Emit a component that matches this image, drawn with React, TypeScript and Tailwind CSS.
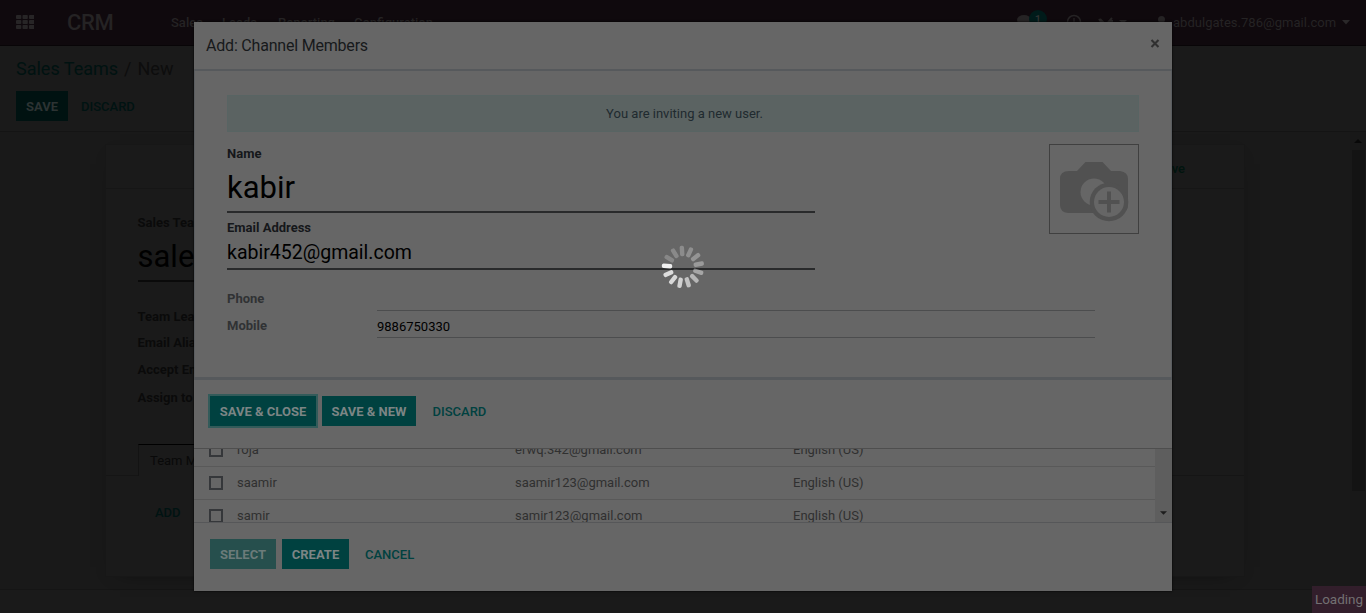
import type { ReactNode } from 'react';

const SPOKES = [0.9, 0.78, 0.75, 0.7, 0.6, 0.52, 0.42, 0.34, 0.3, 0.27, 0.25, 0.23, 0.22];

function Spinner() {
  return (
    <svg className="absolute left-[661px] top-[245px]" width="44" height="44" viewBox="-22 -22 44 44">
      {SPOKES.map((opacity, i) => (
        <rect
          key={i}
          x="10.8"
          y="-2.2"
          width="10.4"
          height="4.4"
          rx="1.8"
          fill="#ffffff"
          opacity={opacity}
          transform={`rotate(${183.5 - (i * 360) / SPOKES.length})`}
        />
      ))}
    </svg>
  );
}

function Camera() {
  return (
    <svg width="88" height="88" viewBox="0 0 88 88">
      <path
        d="M19 26H27L35.5 17H52.5L61 26H70Q78 27 78 34V60Q78 67 71 68H18Q10 67 10 60V34Q10 26 19 26Z"
        fill="#515151"
      />
      <circle cx="44" cy="47" r="13.5" fill="#666" />
      <circle cx="59" cy="57" r="19.3" fill="#515151" />
      <circle cx="59" cy="57" r="15" fill="#666" />
      <path d="M59 46.5V67.5M48.5 57H69.5" stroke="#515151" strokeWidth="4" />
    </svg>
  );
}

function Button({ className, children }: { className: string; children: ReactNode }) {
  return (
    <button className={`h-[30px] shrink-0 whitespace-nowrap text-center text-[13px] font-bold ${className}`}>
      {children}
    </button>
  );
}

function NavBar() {
  return (
    <header className="flex h-[46px] shrink-0 border-b border-[#080507] bg-[#0f090d] text-[13px] font-medium leading-[45px] text-[#252324]">
      <svg className="ml-4 mt-[15px] shrink-0" width="18" height="14" viewBox="0 0 18 14" fill="#272526">
        {[0, 5, 10].map((y) =>
          [0, 6.5, 13].map((x) => <rect key={`${x}-${y}`} x={x} y={y} width="5.3" height="4" rx="0.8" />),
        )}
      </svg>
      <span className="ml-[33px] w-[104px] text-[22px] tracking-[-0.4px]">CRM</span>
      <span className="w-[51px]">Sales</span>
      <span className="w-[56px]">Leads</span>
      <span className="w-[76px]">Reporting</span>
      <span className="w-[663px]">Configuration</span>
      <div className="flex w-[156px] shrink-0">
        <svg width="156" height="30" viewBox="0 0 156 30" fill="#252324">
          <ellipse cx="7" cy="20" rx="7" ry="5" />
          <circle cx="21" cy="19" r="9" fill="#001b1a" />
          <text x="21" y="22.500" textAnchor="middle" fontSize="11" fill="#333">1</text>
          <circle cx="57" cy="22" r="6.500" fill="none" stroke="#252324" strokeWidth="1.500" />
          <path d="M57 18V23H54" fill="none" stroke="#252324" strokeWidth="1.300" />
          <path d="M83 19L90 26M95 18L88 26M84 22L82 19M93 21H96" stroke="#252324" strokeWidth="2" />
          <path d="M102 20H110L106 24Z" />
          <circle cx="144.500" cy="19.500" r="3.500" />
          <path d="M139 27Q139 22 144.500 22Q149 22 149 27Z" />
        </svg>
      </div>
      <span className="w-[162px] shrink-0 whitespace-nowrap text-[13px] font-normal tracking-[0.03px]">abdulgates.786@gmail.com</span>
      <svg className="ml-[7px] mt-[20px] shrink-0" width="8" height="5" viewBox="0 0 8 5" fill="#2a2829">
        <path d="M0 0H8L4 4.500Z" />
      </svg>
    </header>
  );
}

function TeamForm() {
  return (
    <div className="ml-[105px] mt-[12px] h-[433px] w-[1140px] border border-[#171717] bg-[#1a1a1a] shadow-[0_5px_20px_-15px_#000]">
      <div className="h-[44px] border-b border-[#161616] pl-[1040px] text-[13px] font-medium leading-[47px] text-[#00140e]">
        <div className="w-[39px] text-right">Active</div>
      </div>
      <div className="pl-[31.5px] text-[13px] font-bold text-[#0a0a0a]">
        <div className="mt-[24px] h-[20px] leading-[20px]">Sales Team</div>
        <div className="h-[49px] w-[587px] border-b-2 border-[#0a0a0a] text-[31px] font-normal leading-[48px] text-black">sales</div>
        <div className="mt-[25px] h-[26px] leading-[20px]">Team Leader</div>
        <div className="h-[27px] leading-[20px]">Email Alias</div>
        <div className="h-[28px] leading-[20px]">Accept Emails From</div>
        <div className="h-[56px] leading-[20px]">Assign to</div>
      </div>
      <div className="flex h-[32px] border-b border-[#151515]">
        <div className="ml-8 h-[32px] w-[120px] border border-b-0 border-[#131313] border-t-black bg-[#1a1a1a] pl-[11px] text-[13px] leading-[31px] text-[#090909]">Team Members</div>
      </div>
      <div className="mt-[27px] pl-[49px] text-[13px] font-medium leading-[20px] text-[#001312]">ADD</div>
    </div>
  );
}

function Row({ name, email }: { name: string; email: string }) {
  return (
    <div className="flex h-[33px] shrink-0 items-center border-b border-[#595959] pl-[15px] text-[13px] leading-[20px] text-[#303030]">
      <span className="mr-[14px] h-[14px] w-[14px] border-2 border-[#35373a]" />
      <span className="w-[278px]">{name}</span>
      <span className="w-[278px]">{email}</span>
      <span>English (US)</span>
    </div>
  );
}

function MemberDialog() {
  return (
    <section className="absolute left-[194px] top-[22px] flex h-[569px] w-[978px] flex-col bg-[#666] text-[13px] shadow-[0_0_2px_#000]">
      <header className="flex h-[49px] shrink-0 justify-between border-b-2 border-[#56595c] pl-3 pr-[11px] text-[#17191b]">
        <h2 className="text-[16px] leading-[47px] tracking-[-0.2px]">Add: Channel Members</h2>
        <svg className="mt-[17px]" width="12" height="10" viewBox="0 0 12 10">
          <path d="M2.500 1L9.500 8M9.500 1L2.500 8" stroke="#303030" strokeWidth="2.100" />
        </svg>
      </header>
      <div className="h-[306px] shrink-0 border-x border-[#5a5d60] px-8 pt-6">
        <div className="h-[37px] w-[912px] border border-[#586463] bg-[#5b6362] pl-[3px] text-center leading-[35px] text-[#202a2f]">You are inviting a new user.</div>
        <div className="flex justify-between">
          <div className="w-[588px]">
            <div className="mt-[11px] h-[20px] font-bold leading-[22px] text-[#15171a]">Name</div>
            <div className="h-[50px] border-b-2 border-[#292a2b] text-[31px] leading-[49px] text-black">kabir</div>
            <div className="mt-[5px] h-[20px] font-bold leading-[20px] text-[#15171a]">Email Address</div>
            <div className="h-[32px] border-b-2 border-[#292a2b] text-[19.5px] leading-[29px] text-black">kabir452@gmail.com</div>
          </div>
          <div className="mt-[12px] h-[90px] w-[90px] border border-[#404040]"><Camera /></div>
        </div>
        <div className="mt-[18px] flex h-[23px] w-[867.5px] font-bold leading-[22px] text-[#303234]">
          <span className="w-[150px]">Phone</span>
          <span className="flex-1 border-b border-[#4c4d4e]" />
        </div>
        <div className="flex h-[27px] w-[867.5px] font-bold leading-[29px] text-[#303234]">
          <span className="w-[150px]">Mobile</span>
          <span className="flex-1 border-b border-[#4c4d4e] font-normal leading-[32px] text-black">9886750330</span>
        </div>
      </div>
      <footer className="flex h-[72px] shrink-0 border-b border-[#4e4e4e]">
        <div className="flex w-full border-t-[3px] border-[#56595c] pl-4 pt-4">
          <Button className="w-[106px] bg-[#004140] leading-[32px] text-[#7c8585] shadow-[0_0_0_2px_#335b5a]">SAVE &amp; CLOSE</Button>
          <Button className="ml-1.5 w-[94px] bg-[#004140] leading-[32px] text-[#7c8585]">SAVE &amp; NEW</Button>
          <Button className="ml-[16.5px] font-medium leading-[32px] text-[#004140]">DISCARD</Button>
        </div>
      </footer>
      <div className="flex h-[74px] shrink-0 border-b border-[#565759]">
        <div className="flex w-[961px] flex-col justify-start overflow-hidden">
          <div className="-mt-[15px]">
            <Row name="roja" email="erwq.342@gmail.com" />
            <Row name="saamir" email="saamir123@gmail.com" />
            <Row name="samir" email="samir123@gmail.com" />
          </div>
        </div>
        <div className="flex w-[17px] items-end justify-center bg-[#5e5e5e] pb-[7px]">
          <svg className="mr-px" width="7" height="4" viewBox="0 0 8 4"><path d="M0 0H8L4 4Z" fill="#1d1d1d" /></svg>
        </div>
      </div>
      <footer className="flex pl-4 pt-4">
        <Button className="w-[66px] bg-[#264f4d] leading-[32px] text-[#6c7b7a]">SELECT</Button>
        <Button className="ml-1.5 w-[67px] bg-[#004140] leading-[32px] text-[#7c8585]">CREATE</Button>
        <Button className="ml-4 font-medium leading-[32px] text-[#004140]">CANCEL</Button>
      </footer>
    </section>
  );
}

export default function App() {
  return (
    <main className="relative flex h-[613px] w-[1366px] flex-col overflow-hidden bg-[#1a1a1a] font-[Roboto,sans-serif]">
      <NavBar />
      <div className="h-[86px] shrink-0 border-b border-[#141414] pl-4">
        <div className="h-[45px] whitespace-pre pt-[9px] text-[18px] leading-[28px] text-[#0d0d0d]">
          <span className="text-[#001211]">Sales Teams</span>
          <span className="mx-[6px]">/</span>
          <span>New</span>
        </div>
        <div className="flex">
          <Button className="w-[52px] bg-[#001211] leading-[32px] text-[#2c3333]">SAVE</Button>
          <Button className="ml-[13px] font-medium leading-[32px] text-[#001312]">DISCARD</Button>
        </div>
      </div>
      <div className="flex h-[458px] shrink-0 justify-between border-b border-[#151515] bg-[#191919]">
        <TeamForm />
        <div className="flex w-4 flex-col items-center bg-[#181818] pt-[7px]">
          <svg width="8" height="4" viewBox="0 0 8 4"><path d="M0 4H8L4 0Z" fill="#080808" /></svg>
          <div className="mt-[7px] h-[341px] w-[13px] bg-[#131313]" />
        </div>
      </div>
      <MemberDialog />
      <Spinner />
      <div className="absolute bottom-0 right-0 h-[27px] w-[54px] bg-[#321e2b] text-center text-[13.5px] leading-[27px] text-[#727072]">Loading</div>
    </main>
  );
}
